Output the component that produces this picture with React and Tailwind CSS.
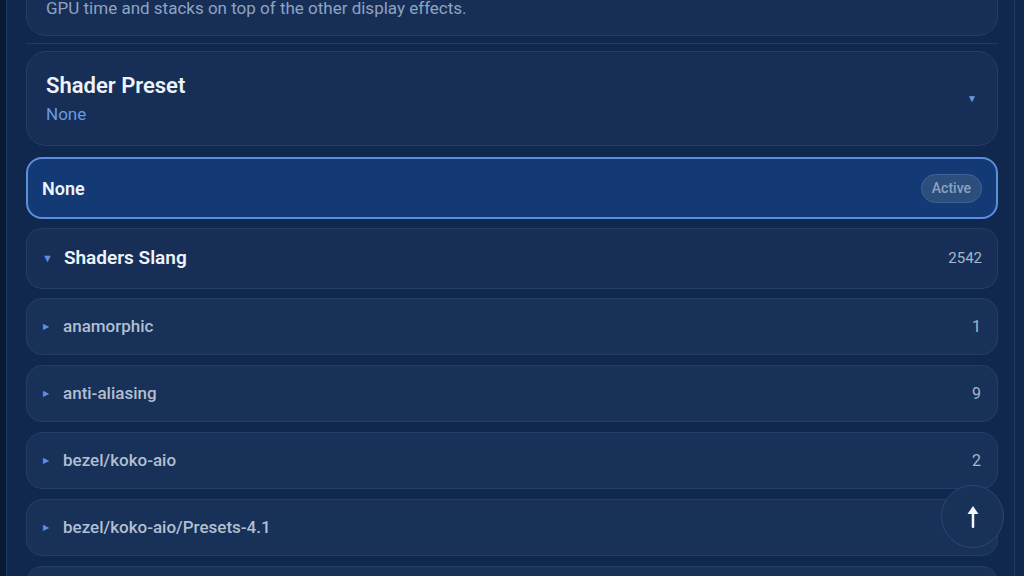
const groups = [
  { name: "anamorphic", count: 1 },
  { name: "anti-aliasing", count: 9 },
  { name: "bezel/koko-aio", count: 2 },
  { name: "bezel/koko-aio/Presets-4.1", count: 1 },
  { name: "bezel/koko-aio/Presets-4.1/Monitor", count: 6 },
];

function Caret({ down = false, small = false }) {
  return (
    <span
      className={`text-[#5b8fe0] leading-none ${small ? "text-[8px]" : "text-[11px]"}`}
    >
      {down ? "▼" : "▶"}
    </span>
  );
}

function UpArrow() {
  return (
    <svg width="14" height="24" viewBox="0 0 14 24" fill="none">
      <path d="M7 1 L12.5 9 H1.5 Z" fill="#f4f7fb" />
      <rect x="5.75" y="7" width="2.5" height="16" rx="1" fill="#f4f7fb" />
    </svg>
  );
}

export default function App() {
  return (
    <div
      className="relative h-[576px] w-[1024px] overflow-hidden bg-[#0b1b36] flex"
      style={{ fontFamily: "Roboto, 'Noto Sans', sans-serif" }}
    >
      <div className="w-[6px] shrink-0 bg-[#0a1a33]" />
      <div className="flex-1 bg-[#10284e] border-l border-r border-[#1e3a66] pl-[19px] pr-[16px] flex flex-col">
        {/* setting card scrolled above the fold */}
        <div className="shrink-0 -mt-[24px] rounded-[20px] border border-[#223f6a] bg-[#172f57] pl-[19px] pr-[32px] pt-[20px] pb-[16px] flex items-start justify-between">
          <p className="text-[17px] leading-[22px] text-[#8fa3c1]">
            GPU time and stacks on top of the other display effects.
          </p>
          <div className="-mt-[20px] h-[21px] w-[36px] rounded-b-[6px] bg-[#2a62c4]" />
        </div>

        <div className="shrink-0 mt-[7px] h-px bg-[#1f3a64]" />

        <div className="shrink-0 mt-[7px] h-[95px] rounded-[20px] border border-[#223f6a] bg-[#172f57] pl-[19px] pr-[20px] flex items-center justify-between">
          <div className="flex flex-col">
            <span className="text-[22px] font-semibold leading-[28px] text-[#eef3fa]">
              Shader Preset
            </span>
            <span className="mt-[3px] text-[17px] leading-[22px] text-[#6a9ae0]">None</span>
          </div>
          <span className="text-[10px] leading-none text-[#6a9ae0]">▼</span>
        </div>

        <div className="shrink-0 mt-[11px] h-[62px] rounded-[16px] border-2 border-[#5b8fe0] bg-[#133a75] pl-[14px] pr-[14px] flex items-center justify-between">
          <span className="text-[18px] font-semibold text-[#eef3fa]">None</span>
          <span className="rounded-full border border-[#3f6494] bg-[#2b4e7c] px-[10px] py-[3px] text-[14px] font-medium text-[#8ea2bc]">
            Active
          </span>
        </div>

        <div className="shrink-0 mt-[9px] h-[61px] rounded-[16px] border border-[#223f6a] bg-[#172f57] pl-[15px] pr-[15px] flex items-center justify-between">
          <div className="flex items-center gap-[11px]">
            <Caret down />
            <span className="text-[19px] font-semibold text-[#eef3fa]">Shaders Slang</span>
          </div>
          <span className="text-[15px] text-[#a6b6cb]">2542</span>
        </div>

        <div className="shrink-0 mt-[9px] flex flex-col gap-[10px]">
          {groups.map((g) => (
            <div
              key={g.name}
              className="h-[57px] shrink-0 rounded-[16px] border border-[#223f6a] bg-[#183158] pl-[16px] pr-[16px] flex items-center justify-between"
            >
              <div className="flex items-center gap-[14px]">
                <Caret small />
                <span className="text-[17px] font-medium text-[#b1bfd3]">{g.name}</span>
              </div>
              <span className="text-[16px] text-[#a6b6cb]">{g.count}</span>
            </div>
          ))}
        </div>
      </div>
      <div className="w-[9px] shrink-0 bg-[#10284e]" />

      {/* scroll to top */}
      <button className="absolute left-[941px] top-[485px] h-[63px] w-[63px] rounded-full border border-[#2b4775] bg-[#183158] flex items-center justify-center">
        <UpArrow />
      </button>
    </div>
  );
}
